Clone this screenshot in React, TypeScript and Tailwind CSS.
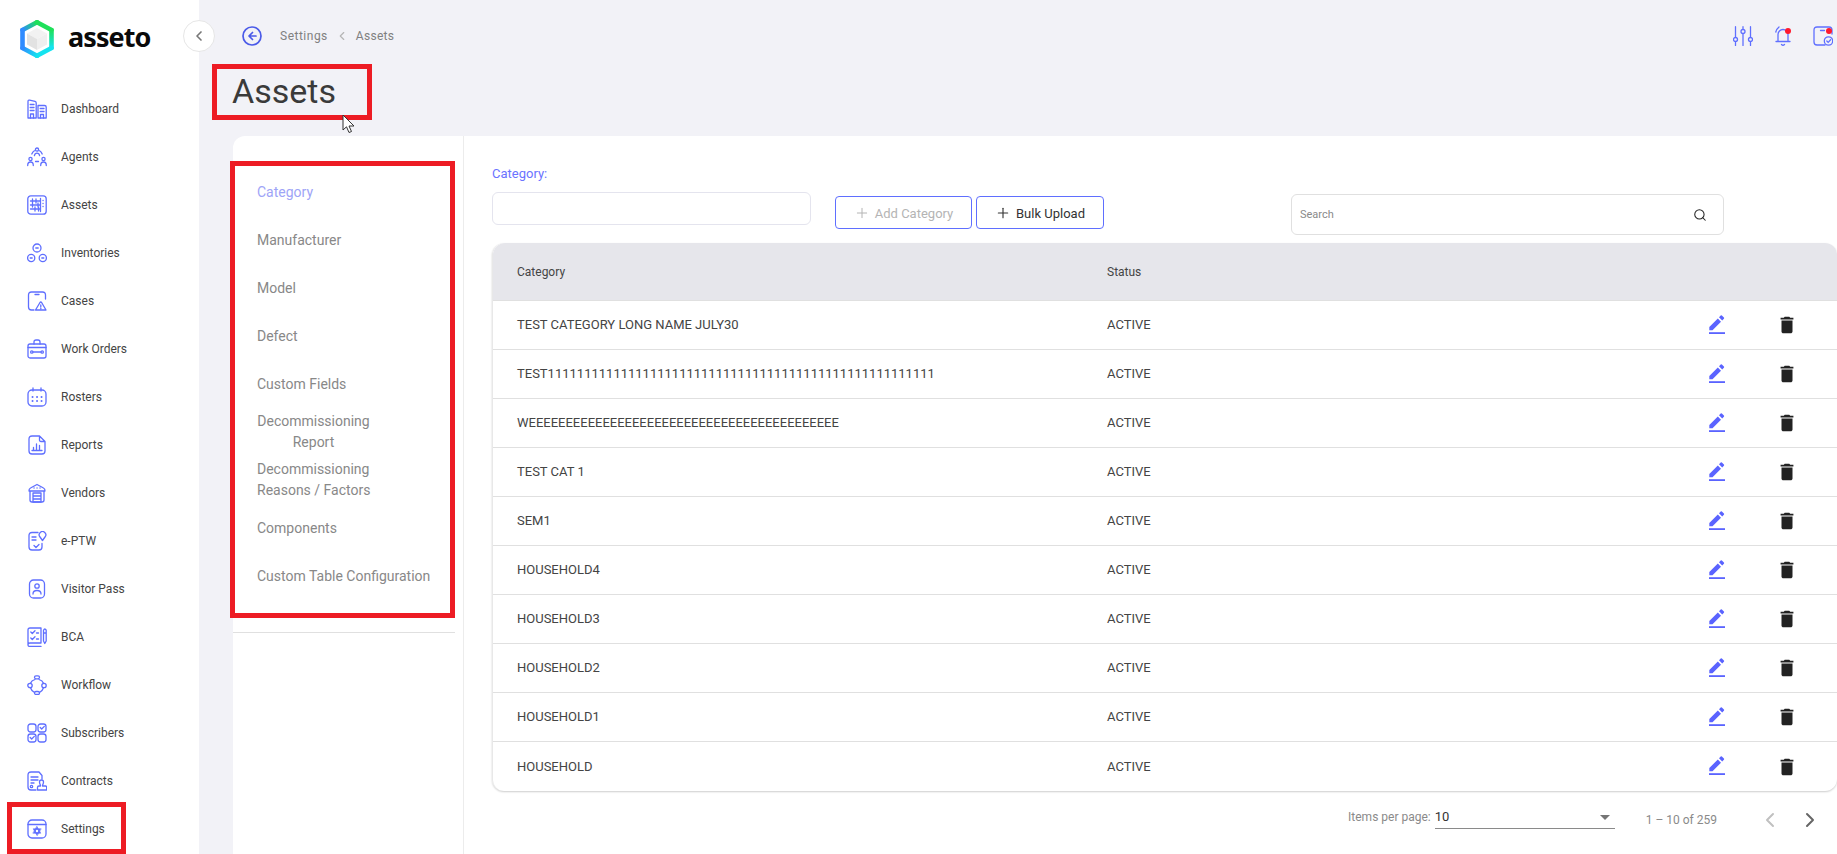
import React from "react";
import { ChevronLeft, ChevronRight, Plus, Search } from "lucide-react";

const iconProps = {
  viewBox: "0 0 20 20",
  fill: "none",
  stroke: "currentColor",
  strokeWidth: 1.3,
  strokeLinecap: "round",
  strokeLinejoin: "round",
} as const;

const NAV_ITEMS: { label: string; icon: React.ReactNode }[] = [
  {
    label: "Dashboard",
    icon: (
      <>
        <path d="M1 19V2.5Q1 .8 2.7 1.2L8 2.4Q9.2 2.7 9.2 4V19Z" />
        <path d="M3.2 5.5h3.8M3.2 8.5h3.8M3.2 11.5h3.8M3.5 19v-4h3v4" />
        <path d="M11 19V6.5h6.5Q19.2 6.5 19.2 8V19Z" />
        <path d="M13.2 9.5h3.8M13.2 12.5h3.8M13.5 19v-3.5h3V19" />
      </>
    ),
  },
  {
    label: "Agents",
    icon: (
      <>
        <circle cx="10" cy="2.6" r="1.6" />
        <path d="M4.8 7Q5.6 4.8 7.4 3.8M15.2 7Q14.4 4.8 12.6 3.8M7.4 8.6Q7.8 6.2 10 6.2T12.6 8.6" />
        <circle cx="3.5" cy="12" r="1.6" />
        <circle cx="16.5" cy="12" r="1.6" />
        <path d="M.7 18.5Q.7 15 3.5 15T6.3 18.5M13.7 18.5Q13.7 15 16.5 15T19.3 18.5M8.5 14.5h3" />
      </>
    ),
  },
  {
    label: "Assets",
    icon: (
      <>
        <rect x="0.8" y="0.8" width="18.4" height="18.4" rx="3" />
        <path d="M3.5 6h10M3.5 10h10M3.5 14h10M5.5 4v4M9 4v4M5.5 8v4M11 8v4M8 12v4M11.5 12v4M13.5 3.5v13M16 5.5h.1M16 8.5h.1M16 11.5h.1" />
      </>
    ),
  },
  {
    label: "Inventories",
    icon: (
      <>
        <circle cx="10" cy="5" r="4" />
        <circle cx="4.2" cy="15" r="3.6" />
        <circle cx="15.8" cy="15" r="3.6" />
        <path d="M8.8 5h2.4M3.2 15h2M14.8 15h2" />
      </>
    ),
  },
  {
    label: "Cases",
    icon: (
      <>
        <path d="M18.5 8V4Q18.5 1 15.5 1H4.5Q1.5 1 1.5 4V16Q1.5 19 4.5 19H7M8 3.5h4" />
        <path d="M8.5 19L13 11.5Q13.8 10.5 14.6 11.5L19 19ZM13.8 14v2M13.8 17.5h.1" />
      </>
    ),
  },
  {
    label: "Work Orders",
    icon: (
      <>
        <path d="M7 5V3Q7 1 9 1h2q2 0 2 2v2" />
        <rect x="1" y="5" width="18" height="14" rx="2" />
        <path d="M1 8.5h18M6 13h8" />
        <circle cx="4.8" cy="13" r="1.2" />
        <circle cx="15.2" cy="13" r="1.2" />
      </>
    ),
  },
  {
    label: "Rosters",
    icon: (
      <>
        <rect x="1" y="3" width="18" height="16" rx="4" />
        <path d="M6 1v3M14 1v3" />
        <path d="M5.5 10h.1M10 10h.1M14.5 10h.1M5.5 14h.1M10 14h.1M14.5 14h.1" strokeWidth={1.9} />
      </>
    ),
  },
  {
    label: "Reports",
    icon: (
      <>
        <path d="M12.5 1H5Q2 1 2 4V16Q2 19 5 19H15Q18 19 18 16V6.5ZM12.5 1V5Q12.5 6.5 14 6.5H18" />
        <path d="M6.5 14.5v-2M9.5 14.5V9M12.5 14.5v-4M5 15.5h10" />
      </>
    ),
  },
  {
    label: "Vendors",
    icon: (
      <>
        <path d="M2 8Q1.8 5.8 3.5 5L10 1.5L16.5 5Q18.2 5.8 18 8ZM3 8V17Q3 19 5 19H15Q17 19 17 17V8" />
        <path d="M6 10h8v9H6ZM6 13h8M6 16h8M7 5h.1M10 5h.1M13 5h.1" />
      </>
    ),
  },
  {
    label: "e-PTW",
    icon: (
      <>
        <path d="M11 1.5H5Q2 1.5 2 4.5V16Q2 19 5 19H12Q15 19 15 16V12.5" />
        <path d="M5 6h4M5 9h4M7 14.5l2 2 3-3" />
        <path d="M15.5 9.5L13 6A3.3 3.3 0 1 1 18 6Z" />
      </>
    ),
  },
  {
    label: "Visitor Pass",
    icon: (
      <>
        <rect x="2.5" y="1" width="15" height="18" rx="4" />
        <circle cx="10" cy="7" r="2.2" />
        <path d="M6 15Q6 11.5 10 11.5T14 15" />
      </>
    ),
  },
  {
    label: "BCA",
    icon: (
      <>
        <path d="M1 18V3Q1 1 3 1H14V16H3Q1 16 1 18Q1 19.5 3 19.5H14" />
        <path d="M3.8 5l1.5 1.5L8 3.8M3.8 11l1.5 1.5L8 9.8M9.5 6h2M9.5 12h2" />
        <path d="M16.5 3.2Q17.8 .8 19.2 3.2V14L17.8 16.5L16.5 14ZM16.5 6h2.7" />
      </>
    ),
  },
  {
    label: "Workflow",
    icon: (
      <>
        <rect x="7.5" y="0.8" width="5" height="3" rx="1.5" />
        <rect x="7.5" y="16.5" width="5" height="3" rx="1.5" />
        <circle cx="3" cy="10.5" r="2.2" />
        <circle cx="17" cy="10.5" r="2.2" />
        <path d="M8 4.5Q4.5 5.5 3.5 8.2M12 4.5Q15.5 5.5 16.5 8.2M3.5 12.8Q4.5 16 7.5 17.5M16.5 12.8Q15.5 16 12.5 17.5" />
      </>
    ),
  },
  {
    label: "Subscribers",
    icon: (
      <>
        <rect x="1" y="1" width="8" height="8" rx="2.5" />
        <rect x="11" y="1" width="8" height="8" rx="2.5" />
        <rect x="1" y="11" width="8" height="8" rx="2.5" />
        <rect x="11" y="11" width="8" height="8" rx="2.5" />
        <path d="M13.2 4.5l1.5 1.5 2.6-2.6M3.2 14.5l1.5 1.5 2.6-2.6" />
      </>
    ),
  },
  {
    label: "Contracts",
    icon: (
      <>
        <path d="M15 8V4.5L12 1H4Q1 1 1 4V16Q1 19 4 19H9" />
        <path d="M4 6h7M4 9h7M4 12h3" />
        <circle cx="4.5" cy="15.5" r="1.2" />
        <path d="M14.5 9a2 2 0 0 1 2 2c0 2-1 2.5-1 4h3q1.2 0 1.2 1.2V19H10.5v-2.8Q10.5 15 12 15h1.5c0-1.5-1-2-1-4a2 2 0 0 1 2-2Z" />
      </>
    ),
  },
  {
    label: "Settings",
    icon: (
      <>
        <rect x="1" y="1" width="18" height="18" rx="4" />
        <path d="M1 5.5h18" />
        <path d="M10 7.6l3.8 6.6H6.2ZM10 16.4L6.2 9.8h7.6Z" fill="currentColor" strokeWidth={0.6} />
        <circle cx="10" cy="12" r="1.2" fill="#fff" stroke="none" />
      </>
    ),
  },
];

const ASSET_MENU: { label: React.ReactNode; multi?: string }[] = [
  { label: "Category" },
  { label: "Manufacturer" },
  { label: "Model" },
  { label: "Defect" },
  { label: "Custom Fields" },
  { label: "Decommissioning Report", multi: "w-[113px] text-center" },
  { label: "Decommissioning Reasons / Factors", multi: "w-[116px]" },
  { label: "Components" },
  { label: "Custom Table Configuration" },
];

const ROWS = [
  "TEST CATEGORY LONG NAME JULY30",
  "TEST11111111111111111111111111111111111111111111111111111",
  "WEEEEEEEEEEEEEEEEEEEEEEEEEEEEEEEEEEEEEEEEEE",
  "TEST CAT 1",
  "SEM1",
  "HOUSEHOLD4",
  "HOUSEHOLD3",
  "HOUSEHOLD2",
  "HOUSEHOLD1",
  "HOUSEHOLD",
];

function Logo() {
  return (
    <svg viewBox="0 0 34 38" className="w-[34px] h-[38px]" fill="none">
      <defs>
        <linearGradient id="lg1" gradientUnits="userSpaceOnUse" x1="2" y1="10" x2="17" y2="2">
          <stop offset="0" stopColor="#2f8bff" />
          <stop offset="1" stopColor="#1fe05a" />
        </linearGradient>
        <linearGradient id="lg2" gradientUnits="userSpaceOnUse" x1="32" y1="10" x2="32" y2="28">
          <stop offset="0" stopColor="#1fe05a" />
          <stop offset="1" stopColor="#14e3ef" />
        </linearGradient>
        <linearGradient id="lg3" gradientUnits="userSpaceOnUse" x1="17" y1="36" x2="2" y2="28">
          <stop offset="0" stopColor="#14e3ef" />
          <stop offset="1" stopColor="#2f8bff" />
        </linearGradient>
      </defs>
      <polygon points="17,8 27,13.5 17,19 7,13.5" fill="#f2f2f2" />
      <polygon points="7,13.5 17,19 17,30 7,24.5" fill="#e2e2e2" />
      <polygon points="27,13.5 17,19 17,30 27,24.5" fill="#efefef" />
      <g strokeWidth="4.6" strokeLinecap="round" strokeLinejoin="round">
        <path d="M2.5 10L17 2.2" stroke="url(#lg1)" />
        <path d="M17 2.2L31.5 10" stroke="#1fe05a" />
        <path d="M31.5 10V28" stroke="url(#lg2)" />
        <path d="M31.5 28L17 35.8" stroke="#14e3ef" />
        <path d="M17 35.8L2.5 28" stroke="url(#lg3)" />
        <path d="M2.5 28V10" stroke="#2f8bff" />
      </g>
    </svg>
  );
}

function EditIcon() {
  return (
    <svg viewBox="0 0 16 19" className="w-4 h-[19px] -mt-[2px] text-[#5a63ff]" fill="currentColor">
      <path d="M0.3 15.2V12L8.8 3.5L12 6.7L3.5 15.2Z" />
      <path d="M10 2.3L11.7 0.6Q12.3 0 12.9 0.6L14.9 2.6Q15.5 3.2 14.9 3.8L13.2 5.5Z" />
      <rect x="0" y="17.2" width="16" height="1.8" />
    </svg>
  );
}

function TrashIcon() {
  return (
    <svg viewBox="0 0 24 24" className="w-[22px] h-[22px] text-[#222222]" fill="currentColor">
      <path d="M6 19c0 1.1.9 2 2 2h8c1.1 0 2-.9 2-2V7H6v12zM19 4h-3.5l-1-1h-5l-1 1H5v2h14V4z" />
    </svg>
  );
}

function RedBox({ className }: { className: string }) {
  return <div className={"absolute border-[5px] border-[#ed1c24] pointer-events-none " + className} />;
}

export default function App() {
  return (
    <div className="relative flex w-[1837px] h-[854px] overflow-hidden bg-[#f2f2f7] font-[Roboto,sans-serif] text-xs">
      <aside className="w-[199px] shrink-0 bg-white">
        <div className="flex h-[85px] pl-5 pt-5">
          <Logo />
          <span className="ml-[14px] mt-[-3px] text-[27px] tracking-[-0.9px] leading-10 font-bold text-[#0a0a0a] font-['Noto_Sans',sans-serif]">
            asseto
          </span>
        </div>
        <nav>
          {NAV_ITEMS.map((item) => (
            <div key={item.label} className="flex items-center h-12 pl-[27px] gap-[14px]">
              <svg {...iconProps} className="w-5 h-5 shrink-0 text-[#5f6fff]">
                {item.icon}
              </svg>
              <span className="text-[#444444]">{item.label}</span>
            </div>
          ))}
        </nav>
      </aside>

      <main className="flex flex-col flex-1 min-w-0">
        <div className="flex items-center h-[72px] pl-[43px] shrink-0">
          <svg viewBox="0 0 20 20" className="w-5 h-5 text-[#4a5ae8]" fill="none" stroke="currentColor" strokeWidth="1.7" strokeLinecap="round" strokeLinejoin="round">
            <circle cx="10" cy="10" r="9" />
            <path d="M10.5 6.5L7 10l3.5 3.5M7.5 10H14" />
          </svg>
          <span className="ml-[18px] tracking-[0.5px] text-[#808080]">Settings</span>
          <ChevronLeft className="ml-[7px] w-[14px] h-[14px] text-[#b5b5b5]" strokeWidth={2} />
          <span className="ml-[7px] tracking-[0.3px] text-[#808080]">Assets</span>
          <div className="flex items-center ml-auto pr-1 gap-[22px]">
            <svg {...iconProps} className="w-5 h-5 text-[#5f6fff]">
              <path d="M2.5 .7V11M2.5 16.5V19.5M10 .7V2.5M10 8.5V19.5M17.5 .7V11M17.5 16.5V19.5" />
              <circle cx="2.5" cy="13.5" r="2" />
              <circle cx="10" cy="5.5" r="2" />
              <circle cx="17.5" cy="13.5" r="2" />
            </svg>
            <svg viewBox="0 0 16 20" className="w-4 h-5 text-[#5f6fff] overflow-visible" fill="none" stroke="currentColor" strokeWidth="1.3" strokeLinecap="round">
              <path d="M3 14.5V8.5A5 5 0 0 1 13 8.5V14.5M1 15.5H15M.8 6Q1.5 3 4 1M6.5 18.5Q8 20 9.5 18.5" />
              <circle cx="13" cy="5" r="3" fill="#ff1a2e" stroke="none" />
            </svg>
            <svg viewBox="0 0 20 20" className="w-5 h-5 text-[#5f6fff]" fill="none" stroke="currentColor" strokeWidth="1.3" strokeLinecap="round">
              <path d="M19 8V4Q19 1 16 1H4Q1 1 1 4V16Q1 19 4 19H12M7.5 4.5h4" />
              <circle cx="15.5" cy="15" r="4.2" />
              <path d="M13.8 15l1.4 1.4 2.4-2.6" />
              <circle cx="16" cy="5" r="3" fill="#ff1a2e" stroke="none" />
            </svg>
          </div>
        </div>
        <h1 className="h-[64px] pl-[33px] text-[34px] leading-[38px] font-normal text-[#3a3a3a] shrink-0">Assets</h1>

        <div className="flex flex-1 min-h-0 ml-[34px] bg-white rounded-tl-[12px]">
          <div className="w-[231px] shrink-0 border-r border-[#ececec]">
            <div className="w-[222px] pt-8 pb-8 border-b border-[#e0e0e0]">
              {ASSET_MENU.map((item, i) => (
                <div key={i} className={"flex items-center h-12 pl-6 text-sm leading-[21px] " + (i === 0 ? "text-[#9ea4f7]" : "text-[#888888]")}>
                  <span className={item.multi}>{item.label}</span>
                </div>
              ))}
            </div>
          </div>

          <div className="flex-1 min-w-0 pl-[28px] pt-[30px]">
            <div className="h-4 leading-4 text-[13px] text-[#6b73ff]">Category:</div>
            <div className="flex items-start mt-[10px]">
              <input className="w-[319px] h-[33px] rounded-[6px] border border-[#e4e4ee] outline-none" />
              <button className="flex items-center justify-center w-[137px] h-[33px] mt-1 ml-6 pt-[2px] rounded-[4px] border border-[#5f6fff] gap-[5px] text-[13px] text-[#b4b4b4]">
                <Plus className="w-4 h-4 -mt-[1px]" strokeWidth={1.5} />
                Add Category
              </button>
              <button className="flex items-center justify-center w-[128px] h-[33px] mt-1 ml-1 pt-[2px] rounded-[4px] border border-[#5f6fff] gap-[5px] text-[13px] text-[#333333]">
                <Plus className="w-4 h-4 -mt-[1px]" strokeWidth={1.7} />
                Bulk Upload
              </button>
              <div className="flex items-center w-[433px] h-[41px] mt-[2px] ml-[187px] pl-2 pr-[16px] rounded-[6px] border border-[#e0e0e0]">
                <span className="flex-1 pt-[2px] text-[11px] text-[#8a8a8a]">Search</span>
                <Search className="w-[14px] h-[14px] text-[#222222]" strokeWidth={1.8} />
              </div>
            </div>

            <div className="mt-2 rounded-[12px] border-l border-[#e8e8e8] shadow-[0_1px_2px_rgba(0,0,0,0.2)] text-[#444444]">
              <div className="flex items-center h-[58px] pl-6 rounded-t-[12px] bg-[#e6e6eb] border-b border-[#e0e0e0]">
                <div className="w-[590px]">Category</div>
                <div>Status</div>
              </div>
              {ROWS.map((name, i) => (
                <div key={i} className={"flex items-center h-[49px] pl-6 pr-[39px] text-[13px] " + (i < ROWS.length - 1 ? "border-b border-[#e0e0e0]" : "")}>
                  <div className="w-[590px]">{name}</div>
                  <div>ACTIVE</div>
                  <div className="ml-auto"><EditIcon /></div>
                  <div className="ml-[51px]"><TrashIcon /></div>
                </div>
              ))}
            </div>

            <div className="flex justify-end items-start pt-[15px] pr-[7px]">
              <span className="leading-4 mt-[3px] mr-[4px] text-[#8a8a8a]">Items per page:</span>
              <div className="flex items-center justify-between w-[180px] h-[23px] border-b border-[#8a8a8a] pr-[5px]">
                <span className="text-[13px] text-[#333333]">10</span>
                <span className="w-0 h-0 border-x-[5px] border-x-transparent border-t-[5px] border-t-[#757575]" />
              </div>
              <span className="ml-[31px] mr-[33px] mt-[6px] leading-4 text-[#8a8a8a]">1 – 10 of 259</span>
              <ChevronLeft className="w-10 h-6 mt-[2px] text-[#c0c0c0]" strokeWidth={2} />
              <ChevronRight className="w-10 h-6 mt-[2px] text-[#666666]" strokeWidth={2} />
            </div>
          </div>
        </div>
      </main>

      <button className="absolute left-[183px] top-5 flex items-center justify-center w-8 h-8 rounded-full bg-white border border-[#e6e6e6] text-[#777777]">
        <ChevronLeft className="w-4 h-4" strokeWidth={2.5} />
      </button>

      <RedBox className="left-[212px] top-16 w-[160px] h-14" />
      <RedBox className="left-[230px] top-[161px] w-[225px] h-[457px]" />
      <RedBox className="left-[7px] top-[802px] w-[119px] h-[52px]" />

      <svg viewBox="0 0 13 20" className="absolute left-[342px] top-[114px] w-[13px] h-5" fill="#fff" stroke="#333333" strokeWidth="1">
        <path d="M1 1V16L4.5 12.8L7 18.5L9.5 17.5L7 12H12Z" />
      </svg>
    </div>
  );
}
